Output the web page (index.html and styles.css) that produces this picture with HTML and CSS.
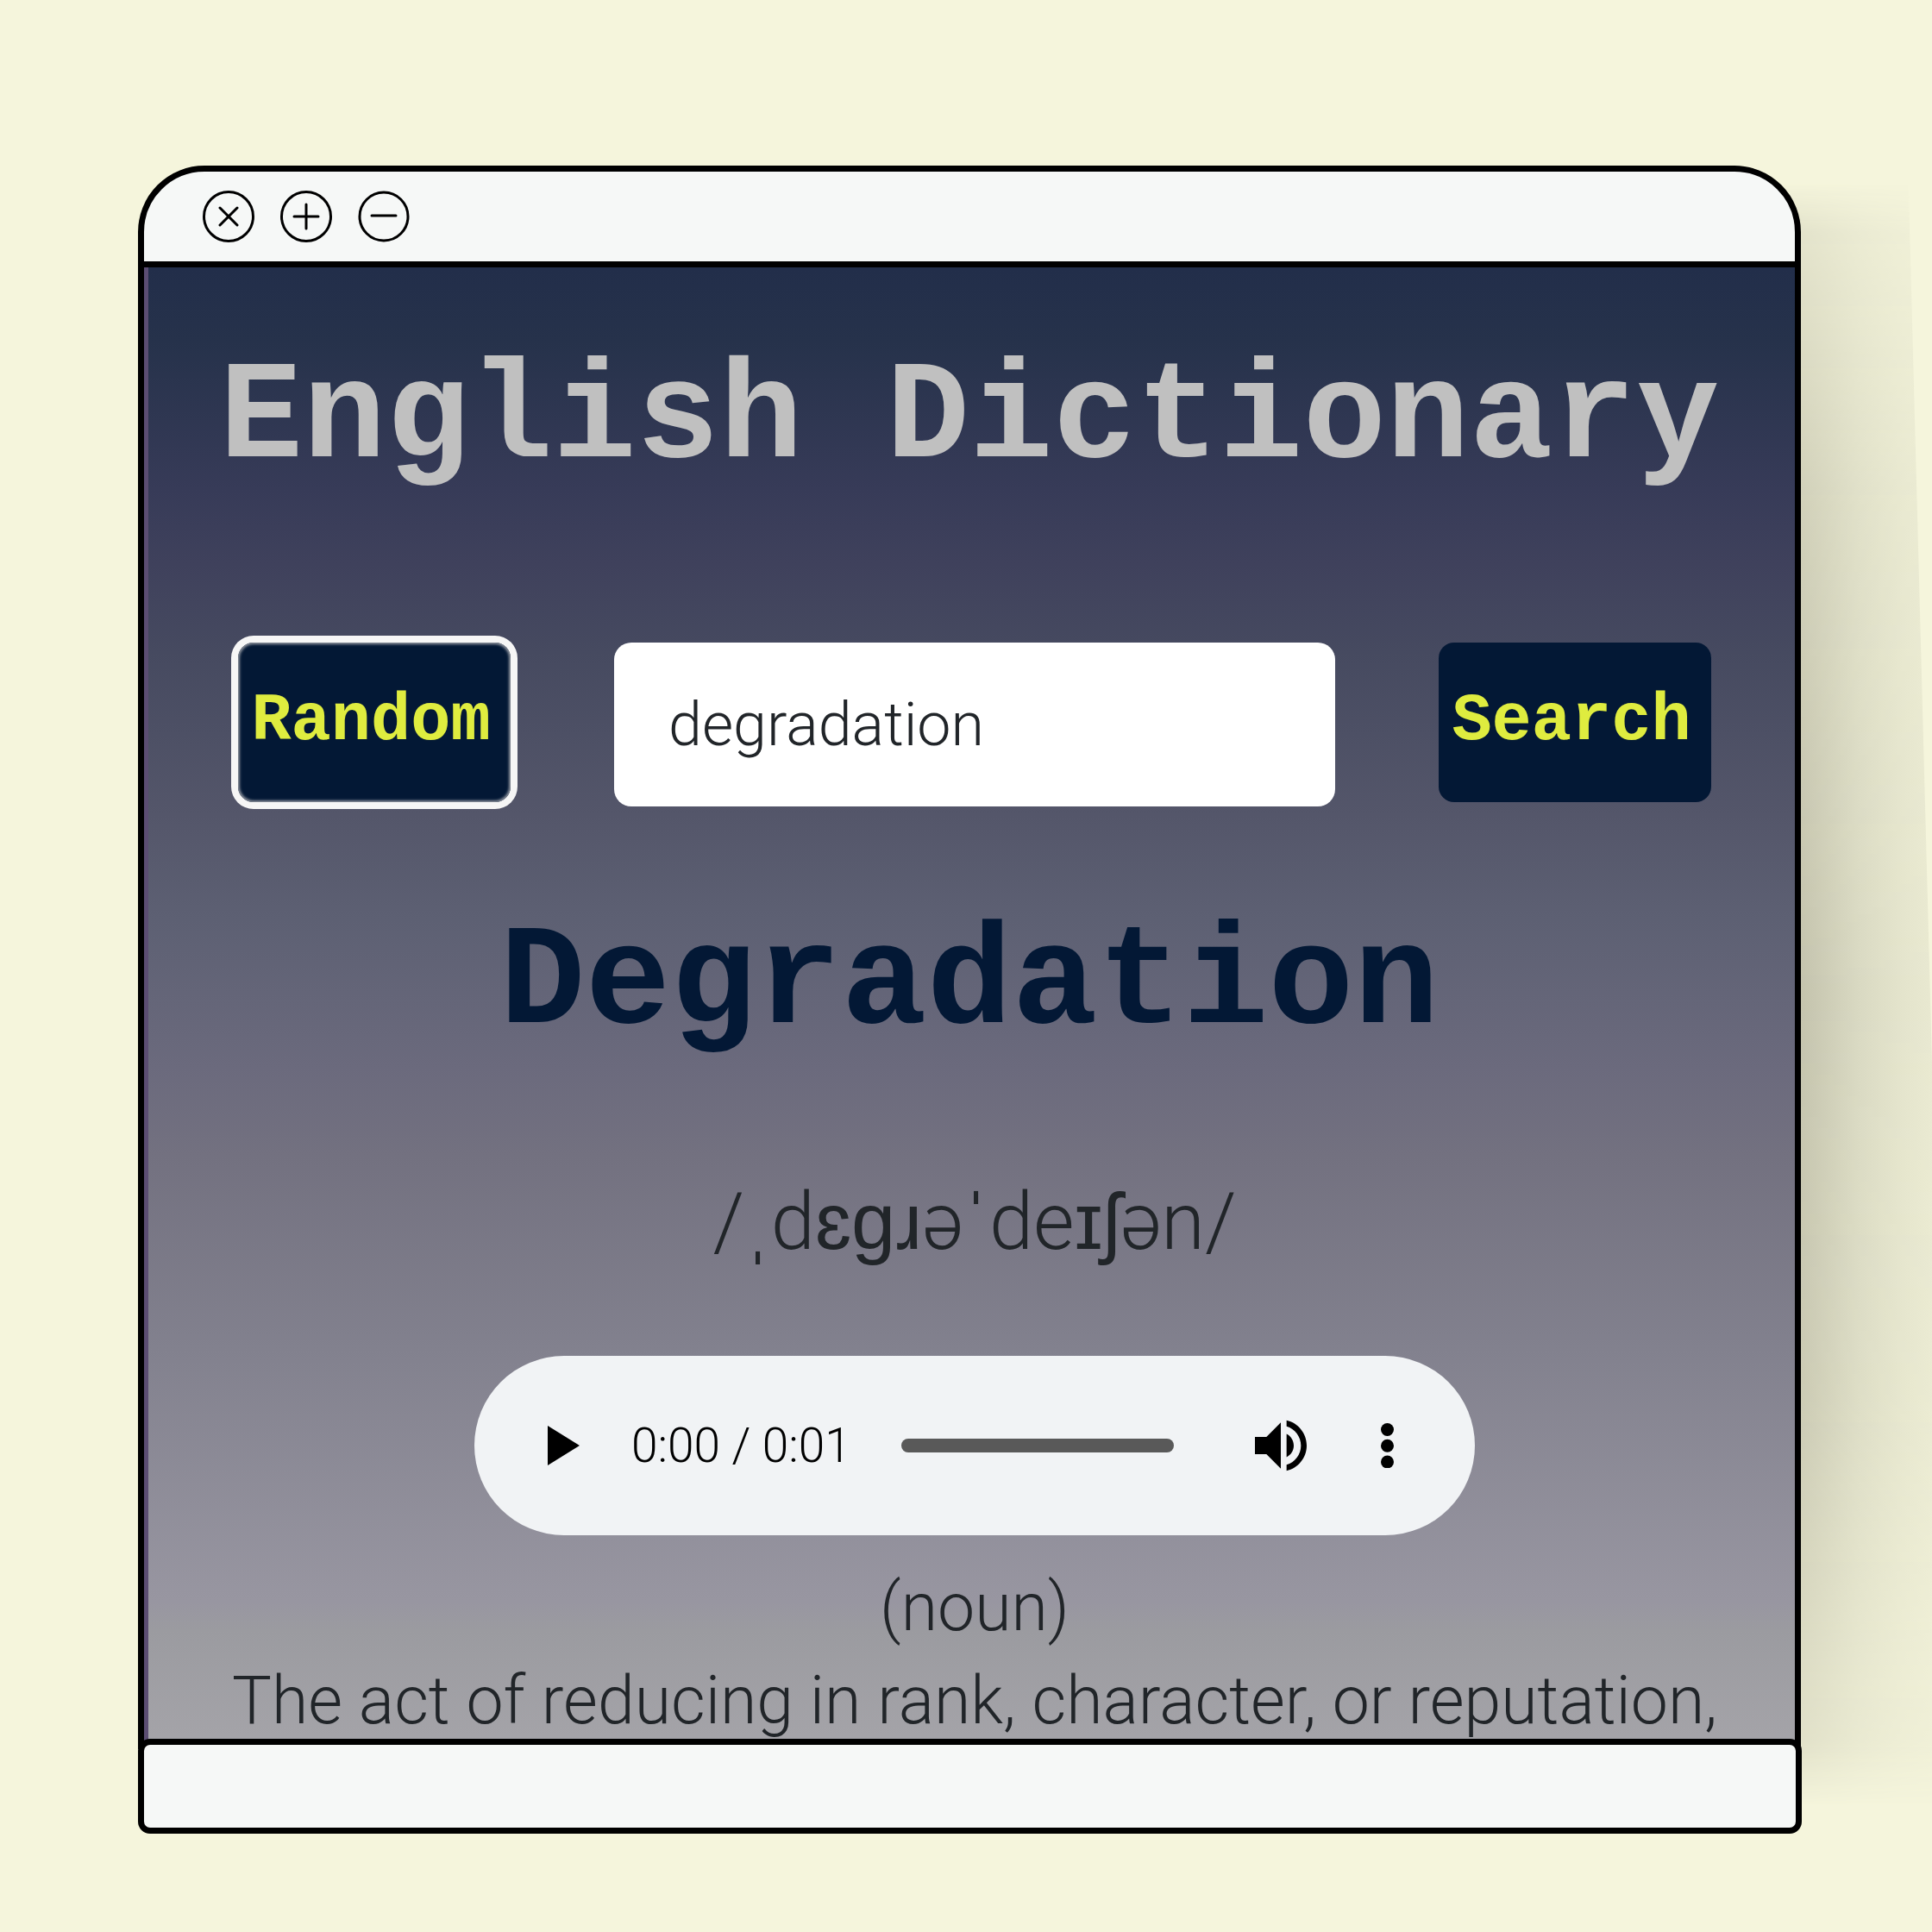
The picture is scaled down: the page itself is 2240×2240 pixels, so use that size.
FILE: index.html
```html
<!DOCTYPE html>
<html lang="en">
<head>
<meta charset="utf-8">
<meta name="viewport" content="width=device-width, initial-scale=1">
<title>English Dictionary</title>
<link rel="stylesheet" href="styles.css">
</head>
<body>
<div class="window">
  <div class="window-shadow"></div>
  <header class="titlebar">
    <button class="window-button" type="button" aria-label="Close">
      <svg viewBox="0 0 60 60"><circle cx="30" cy="30" r="28.5"/><path d="M20 20l20 20M40 20l-20 20"/></svg>
    </button>
    <button class="window-button" type="button" aria-label="Maximize">
      <svg viewBox="0 0 60 60"><circle cx="30" cy="30" r="28.5"/><path d="M30 16v28M16 30h28"/></svg>
    </button>
    <button class="window-button" type="button" aria-label="Minimize">
      <svg viewBox="0 0 60 60"><circle cx="30" cy="30" r="28"/><path d="M16 29h28"/></svg>
    </button>
  </header>
  <main class="page">
    <h1 class="title">English Dictionary</h1>
    <form class="search">
      <button class="action action-focused" type="button">Random</button>
      <input class="query" type="text" value="degradation" aria-label="Word">
      <button class="action" type="button">Search</button>
    </form>
    <h2 class="word">Degradation</h2>
    <p class="phonetic">/<span class="ipa">ˌ</span>d<span class="strong">ɛɡɹ</span>ə<span class="ipa">ˈ</span>de<span class="strong">ɪ</span><span class="ipa">ʃ</span>ən/</p>
    <div class="player">
      <button class="player-button play" type="button" aria-label="Play">
        <svg viewBox="0 0 37 46"><path d="M0 0L37 23L0 46z"/></svg>
      </button>
      <span class="time">0:00 / 0:01</span>
      <input class="seek" type="range" min="0" max="1" value="0" aria-label="Seek">
      <button class="player-button volume" type="button" aria-label="Mute">
        <svg viewBox="3 3 18 18"><path d="M3 9v6h4l5 5V4L7 9H3zm13.5 3c0-1.770-1.020-3.290-2.500-4.030v8.050c1.480-.73 2.500-2.250 2.500-4.020zM14 3.230v2.060c2.890.86 5 3.540 5 6.710s-2.110 5.850-5 6.710v2.060c4.010-.91 7-4.490 7-8.770s-2.990-7.860-7-8.770z"/></svg>
      </button>
      <button class="player-button more" type="button" aria-label="More options">
        <svg viewBox="0 0 16 56"><circle cx="8" cy="8" r="8"/><circle cx="8" cy="28" r="8"/><circle cx="8" cy="48" r="8"/></svg>
      </button>
    </div>
    <p class="part">(noun)</p>
    <p class="definition">The act of reducing in rank, character, or reputation,</p>
  </main>
  <footer class="statusbar"></footer>
</div>
</body>
</html>
```
FILE: styles.css
```css
* {
  box-sizing: border-box;
}

body {
  margin: 0;
  min-height: 100vh;
  padding: 192px 152px 112px 160px;
  background: #f5f5dc;
  color: #212529;
  font-family: Roboto, "Open Sans", sans-serif;
  font-weight: 300;
  overflow-x: hidden;
}

h1, h2, p {
  margin: 0;
}

button, input {
  border: 0;
  margin: 0;
  padding: 0;
  font: inherit;
}

svg {
  display: block;
  width: 100%;
}

.window {
  position: relative;
}

.window-shadow {
  position: absolute;
  top: 20px;
  bottom: 32px;
  left: 96%;
  width: 232px;
  background: linear-gradient(90deg, #bfbea9 0, #c3c2ac 32%, #d9d9c2 62%, #e4e4cc 84%, #e9e9d1);
  clip-path: polygon(0 0, 87% 0, 100% 60%, 100% 100%, 0 100%);
  -webkit-mask-image: linear-gradient(transparent, rgba(0, 0, 0, 0.35) 3%, rgba(0, 0, 0, 0.75) 20%, #000 50%, rgba(0, 0, 0, 0.85) 75%, rgba(0, 0, 0, 0.4) 96%, transparent);
  mask-image: linear-gradient(transparent, rgba(0, 0, 0, 0.35) 3%, rgba(0, 0, 0, 0.75) 20%, #000 50%, rgba(0, 0, 0, 0.85) 75%, rgba(0, 0, 0, 0.4) 96%, transparent);
}

.titlebar {
  position: relative;
  display: flex;
  gap: 30px;
  height: 118px;
  padding: 22px 68px;
  border: 7px solid #000;
  border-radius: 77px 77px 0 0;
  background: #f6f8f7;
}

.window-button {
  width: 60px;
  height: 60px;
  background: none;
}

.window-button svg {
  fill: none;
  stroke: #000;
  stroke-width: 3;
  stroke-linecap: round;
}

.page {
  position: relative;
  display: flex;
  flex-direction: column;
  align-items: center;
  padding: 80px 97px 2px 109px;
  border: solid #000;
  border-width: 0 7px;
  background: linear-gradient(#222e4a, #26324b 5%, #373b58 15%, #3f415c 20%, #464a60 26%, #54566a 37%, #5d6073 44%, #6b6a7d 54%, #737180 60%, #82818e 73%, #9896a1 90%, #9b9ba0 92%, #a5a4a9);
  box-shadow: inset 5px 0 0 #5b4d72;
  overflow: hidden;
  white-space: nowrap;
}

.title, .word, .action {
  font-family: "Liberation Mono", monospace;
  font-weight: 700;
}

.title, .word {
  margin-right: 12px;
  line-height: 192px;
}

.title {
  color: #c0c0c0;
  font-size: 161px;
}

.search {
  display: flex;
  gap: 120px;
  width: 100%;
  margin-top: 163px;
}

.action {
  flex: none;
  width: 316px;
  height: 185px;
  padding: 0 8px 2px 0;
  border-radius: 18px;
  background: #031835;
  color: #dfec3f;
  font-size: 77px;
}

.action-focused {
  box-shadow: 0 0 0 8px #f6f6f6, inset 0 0 3px 2px #8d929c;
}

.query {
  flex: 1;
  min-width: 0;
  height: 190px;
  padding: 0 63px;
  border-radius: 20px;
  background: #fff;
  color: #212529;
  font-size: 70px;
}

.word {
  margin-top: 111px;
  color: #031835;
  font-size: 165px;
}

.phonetic {
  margin-top: 119px;
  font-size: 92px;
  line-height: 120px;
}

.strong {
  font-weight: 500;
}

.ipa {
  font-family: "Liberation Sans", sans-serif;
  line-height: 1;
}

.player {
  display: flex;
  flex: none;
  align-items: center;
  width: 1160px;
  height: 208px;
  margin-top: 95px;
  padding: 0 94px 0 85px;
  border-radius: 104px;
  background: #f1f3f5;
  color: #000;
}

.player-button {
  flex: none;
  background: none;
}

.play {
  width: 37px;
}

.time {
  margin-left: 60px;
  font-size: 55px;
}

.seek {
  flex: 1;
  min-width: 0;
  height: 16px;
  margin: 0 94px 0 58px;
  border-radius: 8px;
  background: #595959;
  appearance: none;
}

.seek::-webkit-slider-thumb {
  width: 0;
  height: 0;
  appearance: none;
}

.volume {
  width: 60px;
}

.more {
  width: 15px;
  margin-left: 86px;
}

.part, .definition {
  font-size: 77px;
  line-height: 108px;
}

.part {
  margin-top: 30px;
}

.statusbar {
  position: relative;
  height: 110px;
  margin: -12px -1px 0 0;
  border: 7px solid #000;
  border-radius: 14px;
  background: #f6f8f7;
}
```
